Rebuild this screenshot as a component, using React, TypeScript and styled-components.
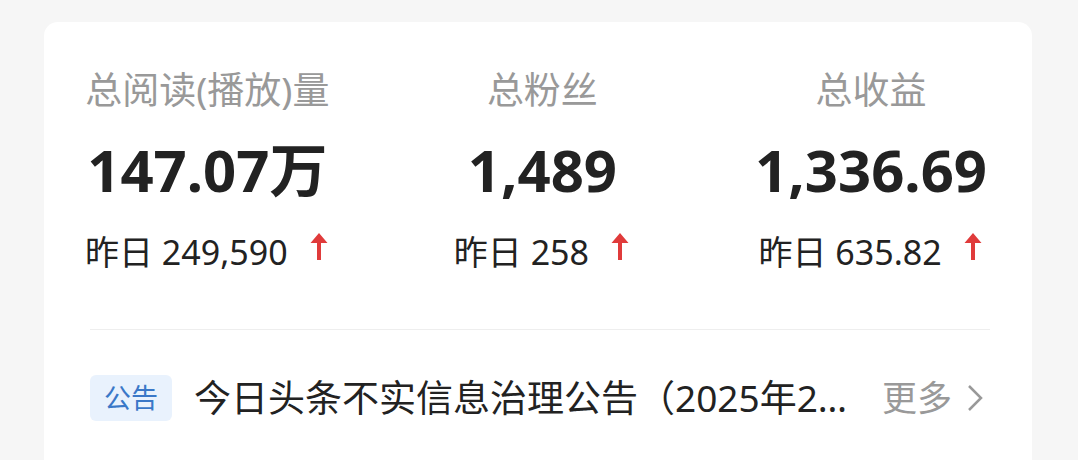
import styled, { createGlobalStyle } from 'styled-components';

const GlobalStyle = createGlobalStyle`
  html, body {
    margin: 0;
    padding: 0;
    background: #f6f6f6;
    font-family: "Noto Sans", "Noto Sans CJK SC", sans-serif;
  }
`;

const Page = styled.div`
  width: 1078px;
  height: 460px;
  overflow: hidden;
  padding: 22px 46px 0 44px;
  box-sizing: border-box;
`;

const Card = styled.div`
  background: #fff;
  border-radius: 14px;
  padding: 42px 42px 40px 46px;
  height: 520px;
  box-sizing: border-box;
`;

const Stats = styled.div`
  display: flex;
  justify-content: space-between;
  padding: 0 3px 0 0;
  margin-left: -5px;
`;

const Stat = styled.div`
  display: flex;
  flex-direction: column;
  align-items: center;
`;

const Label = styled.div`
  font-size: 37px;
  line-height: 52px;
  color: #999;
`;

const Value = styled.div`
  margin-top: 22px;
  font-weight: 700;
  font-size: 58px;
  line-height: 64px;
  color: #222;
`;

const Sub = styled.div`
  margin-top: 27px;
  display: flex;
  align-items: center;
  font-size: 34px;
  line-height: 46px;
  color: #222;
`;

const Arrow = styled.svg`
  width: 22px;
  height: 30px;
  margin-left: 20px;
  margin-top: -10px;
`;

const Divider = styled.div`
  height: 1px;
  background: #eeeeee;
  margin-top: 54px;
`;

const Notice = styled.div`
  display: flex;
  align-items: center;
  margin-top: 45px;
`;

const Tag = styled.span`
  flex: none;
  background: #e9f2fd;
  color: #3a78c8;
  font-size: 27px;
  line-height: 46px;
  padding: 0 14px;
  border-radius: 6px;
`;

const Title = styled.span`
  flex: 1;
  min-width: 0;
  margin-left: 22px;
  font-size: 37px;
  line-height: 46px;
  color: #222;
  white-space: nowrap;
  overflow: hidden;
  text-overflow: ellipsis;
`;

const More = styled.span`
  flex: none;
  display: flex;
  align-items: center;
  margin: 0 6px 0 22px;
  font-size: 35px;
  line-height: 46px;
  color: #999;
  gap: 14px;
`;

const UpArrow = () => (
  <Arrow viewBox="0 0 22 30">
    <path d="M11 1 L19.5 11 L13 11 L13 28 L9 28 L9 11 L2.5 11 Z" fill="#e03b3b" />
  </Arrow>
);

const stats = [
  { label: '总阅读(播放)量', value: '147.07万', yesterday: '249,590' },
  { label: '总粉丝', value: '1,489', yesterday: '258' },
  { label: '总收益', value: '1,336.69', yesterday: '635.82' },
];

export default function App() {
  return (
    <>
      <GlobalStyle />
      <Page>
        <Card>
          <Stats>
            {stats.map((s) => (
              <Stat key={s.label}>
                <Label>{s.label}</Label>
                <Value>{s.value}</Value>
                <Sub>
                  <span>昨日 {s.yesterday}</span>
                  <UpArrow />
                </Sub>
              </Stat>
            ))}
          </Stats>
          <Divider />
          <Notice>
            <Tag>公告</Tag>
            <Title>今日头条不实信息治理公告（2025年2月第一期）</Title>
            <More>
              更多
              <svg width="18" height="30" viewBox="0 0 18 30">
                <path d="M3 3 L15 15 L3 27" fill="none" stroke="#999" strokeWidth="2.5" />
              </svg>
            </More>
          </Notice>
        </Card>
      </Page>
    </>
  );
}
